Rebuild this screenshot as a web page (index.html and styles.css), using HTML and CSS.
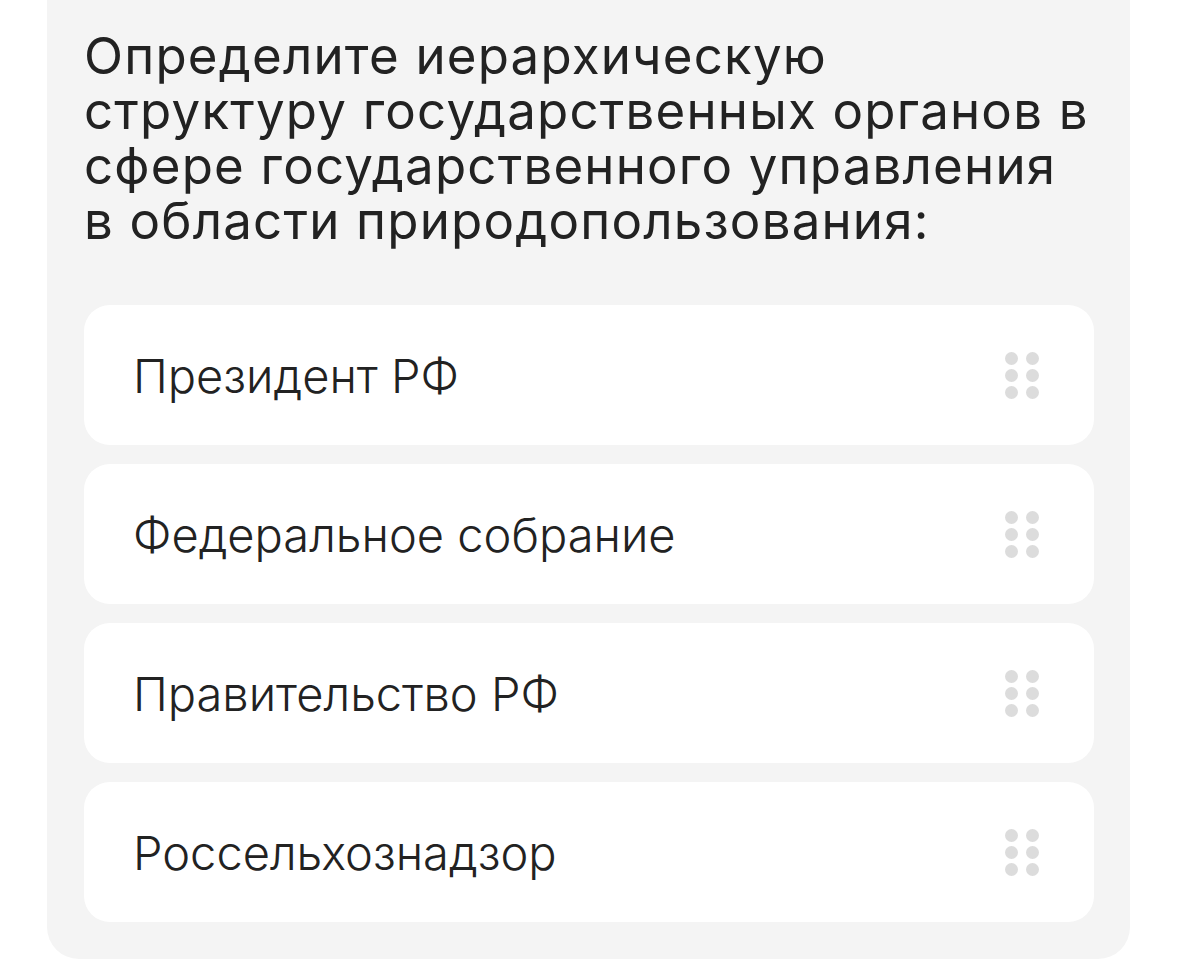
FILE: index.html
```html
<!DOCTYPE html>
<html lang="ru">
<head>
<meta charset="utf-8">
<link rel="stylesheet" href="styles.css">
</head>
<body>
<div class="card">
  <h2 class="question">Определите иерархическую структуру государственных органов в сфере государственного управления в области природопользования:</h2>
  <ul class="options">
    <li class="option"><span class="label">Президент РФ</span><span class="handle"><i></i><i></i><i></i><i></i><i></i><i></i></span></li>
    <li class="option"><span class="label">Федеральное собрание</span><span class="handle"><i></i><i></i><i></i><i></i><i></i><i></i></span></li>
    <li class="option"><span class="label">Правительство РФ</span><span class="handle"><i></i><i></i><i></i><i></i><i></i><i></i></span></li>
    <li class="option"><span class="label">Россельхознадзор</span><span class="handle"><i></i><i></i><i></i><i></i><i></i><i></i></span></li>
  </ul>
</div>
</body>
</html>
```
FILE: styles.css
```css
html, body {
  margin: 0;
  padding: 0;
  background: #ffffff;
}
body {
  font-family: Inter, "Noto Sans", sans-serif;
  color: #222222;
}
.card {
  margin: 0 49px 0 47px;
  background: #f4f4f4;
  border-radius: 0 0 32px 32px;
  padding: 28px 36px 37px 37px;
}
.question {
  margin: 0 0 57px 0;
  font-size: 51px;
  line-height: 55px;
  font-weight: 400;
  letter-spacing: 1.2px;
  color: #222222;
}
.options {
  list-style: none;
  margin: 0;
  padding: 0;
  display: flex;
  flex-direction: column;
  gap: 19px;
}
.option {
  height: 140px;
  background: #ffffff;
  border-radius: 26px;
  display: flex;
  align-items: center;
  justify-content: space-between;
  padding: 0 55px 0 49px;
}
.label {
  font-size: 47px;
  font-weight: 300;
  color: #222222;
}
.handle {
  display: grid;
  grid-template-columns: 13px 13px;
  grid-auto-rows: 13px;
  column-gap: 8px;
  row-gap: 4px;
}
.handle i {
  display: block;
  width: 13px;
  height: 13px;
  border-radius: 50%;
  background: #dcdcdc;
}
```
